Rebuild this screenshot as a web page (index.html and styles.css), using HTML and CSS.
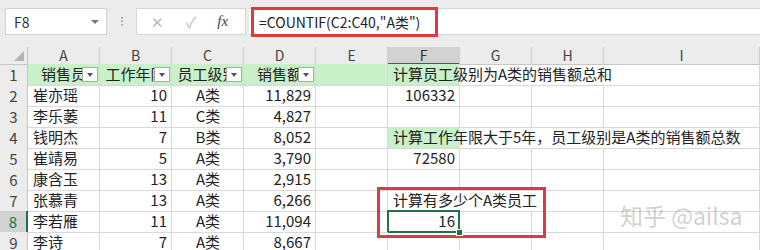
FILE: index.html
```html
<!DOCTYPE html>
<html lang="zh-CN">
<head>
  <meta charset="UTF-8">
  <title>COUNTIF</title>
  <link rel="stylesheet" href="styles.css">
</head>
<body>

  <div class="top">
    <div class="namebox"><span>F8</span><span class="caret"></span></div>
    <div class="grip"></div>
    <div class="fxbox">
      <span class="x">✕</span>
      <span class="ok">✓</span>
      <span class="fx">fx</span>
    </div>
    <div class="formula">=COUNTIF(C2:C40,"A类")</div>
    <div class="mark mark-formula"></div>
  </div>

  <div class="sheet">
    <div class="row head">
      <div class="corner"></div>
      <div class="ch">A</div><div class="ch">B</div><div class="ch">C</div><div class="ch">D</div>
      <div class="ch">E</div><div class="ch sel">F</div><div class="ch">G</div><div class="ch">H</div>
      <div class="ch">I</div>
    </div>

    <div class="row">
      <div class="rh">1</div>
      <div class="c title">销售员<i class="flt"></i></div>
      <div class="c title">工作年限<i class="flt"></i></div>
      <div class="c title">员工级别<i class="flt"></i></div>
      <div class="c title">销售额<i class="flt"></i></div>
      <div class="c green"></div>
      <div class="c note green-first span4">计算员工级别为A类的销售额总和</div>
    </div>

    <div class="row">
      <div class="rh">2</div>
      <div class="c">崔亦瑶</div><div class="c r">10</div><div class="c m">A类</div><div class="c r">11,829</div>
      <div class="c"></div><div class="c r">106332</div><div class="c"></div><div class="c"></div><div class="c"></div>
    </div>

    <div class="row">
      <div class="rh">3</div>
      <div class="c">李乐萎</div><div class="c r">11</div><div class="c m">C类</div><div class="c r">4,827</div>
      <div class="c"></div><div class="c"></div><div class="c"></div><div class="c"></div><div class="c"></div>
    </div>

    <div class="row">
      <div class="rh">4</div>
      <div class="c">钱明杰</div><div class="c r">7</div><div class="c m">B类</div><div class="c r">8,052</div>
      <div class="c"></div>
      <div class="c note green-first span4">计算工作年限大于5年，员工级别是A类的销售额总数</div>
    </div>

    <div class="row">
      <div class="rh">5</div>
      <div class="c">崔靖易</div><div class="c r">5</div><div class="c m">A类</div><div class="c r">3,790</div>
      <div class="c"></div><div class="c r">72580</div><div class="c"></div><div class="c"></div><div class="c"></div>
    </div>

    <div class="row">
      <div class="rh">6</div>
      <div class="c">康含玉</div><div class="c r">13</div><div class="c m">A类</div><div class="c r">2,915</div>
      <div class="c"></div><div class="c"></div><div class="c"></div><div class="c"></div><div class="c"></div>
    </div>

    <div class="row">
      <div class="rh">7</div>
      <div class="c">张慕青</div><div class="c r">13</div><div class="c m">A类</div><div class="c r">6,266</div>
      <div class="c"></div>
      <div class="c note span3">计算有多少个A类员工</div>
      <div class="c"></div>
    </div>

    <div class="row">
      <div class="rh sel">8</div>
      <div class="c">李若雁</div><div class="c r">11</div><div class="c m">A类</div><div class="c r">11,094</div>
      <div class="c"></div><div class="c r active">16</div><div class="c"></div><div class="c"></div><div class="c"></div>
    </div>

    <div class="row">
      <div class="rh">9</div>
      <div class="c">李诗</div><div class="c r">7</div><div class="c m">A类</div><div class="c r">8,667</div>
      <div class="c"></div><div class="c"></div><div class="c"></div><div class="c"></div><div class="c"></div>
    </div>

    <div class="mark mark-cells"></div>
    <div class="watermark">知乎 @ailsa</div>
  </div>

</body>
</html>
```

FILE: styles.css
```css
body {
  margin: 0;
  font-family: "Noto Sans CJK SC", "Noto Sans", sans-serif;
  color: #222;
  background: #fff;
  overflow: hidden;
}

/* formula bar */
.top {
  position: relative;
  display: flex;
  align-items: center;
  height: 47px;
  padding-left: 5px;
  background: #ececec;
  box-sizing: border-box;
}
.namebox {
  display: flex;
  align-items: center;
  justify-content: space-between;
  width: 102px;
  height: 27px;
  padding: 0 7px 0 8px;
  margin-top: -4px;
  box-sizing: border-box;
  background: #fff;
  border: 1px solid #d2d2d2;
  font-size: 14px;
  color: #333;
}
.caret {
  width: 0;
  height: 0;
  border-left: 4px solid transparent;
  border-right: 4px solid transparent;
  border-top: 4px solid #777;
}
.grip {
  width: 2px;
  height: 11px;
  margin: -4px 13px 0 14px;
  background: radial-gradient(circle, #aaa 0.9px, transparent 1.2px) 0 0 / 2px 3.5px;
}
.fxbox {
  display: flex;
  align-items: center;
  width: 110px;
  height: 27px;
  margin-top: -4px;
  box-sizing: border-box;
  background: #fff;
  border: 1px solid #d6d6d6;
  color: #bbb;
  font-size: 15px;
}
.fxbox .x { margin-left: 14px; }
.fxbox .ok { margin-left: 22px; }
.fxbox .fx {
  margin-left: 21px;
  font-family: "Liberation Serif", serif;
  font-style: italic;
  font-size: 15px;
  color: #444;
}
.formula {
  flex: 1;
  height: 27px;
  margin: -4px 0 0 3px;
  padding-left: 10px;
  line-height: 26px;
  box-sizing: border-box;
  background: #fff;
  border-top: 1px solid #d6d6d6;
  border-bottom: 1px solid #d6d6d6;
  font-size: 14px;
  color: #222;
}
.mark {
  position: absolute;
  border: 3px solid #dc3b42;
  box-sizing: border-box;
}
.mark-formula {
  left: 251px;
  top: 7px;
  width: 187px;
  height: 30px;
}

/* sheet */
.sheet {
  position: relative;
}
.row {
  display: grid;
  grid-template-columns: 28px repeat(8, 72px) 1fr;
  height: 21px;
}
.head {
  height: 17px;
  background: #ececec;
}
.corner {
  position: relative;
  border-right: 1px solid #c6c6c6;
  border-bottom: 1px solid #c6c6c6;
}
.corner::after {
  content: "";
  position: absolute;
  right: 3px;
  bottom: 3px;
  border-left: 10px solid transparent;
  border-bottom: 10px solid #b4b4b4;
}
.ch {
  text-align: center;
  font-size: 14px;
  line-height: 16px;
  color: #444;
  border-right: 1px solid #cfcfcf;
  border-bottom: 1px solid #c6c6c6;
}
.ch.sel {
  background: #d2d2d2;
  border-bottom: 2px solid #217346;
  color: #333;
}
.rh {
  text-align: center;
  font-size: 15px;
  line-height: 21px;
  color: #444;
  background: #ececec;
  border-right: 1px solid #c6c6c6;
  border-bottom: 1px solid #d8d8d8;
}
.rh.sel {
  background: #d2d2d2;
  color: #217346;
  border-right: 2px solid #217346;
}
.c {
  position: relative;
  padding: 0 4px 0 5px;
  font-size: 15px;
  line-height: 20px;
  white-space: nowrap;
  overflow: hidden;
  border-right: 1px solid #d8d8d8;
  border-bottom: 1px solid #d8d8d8;
}
.r { text-align: right; }
.m { text-align: center; }
.title {
  padding: 0;
  text-align: center;
  background: #c9f1c9;
}
.green { background: #c9f1c9; }
.green-first {
  background: linear-gradient(#c9f1c9, #c9f1c9) no-repeat 0 0 / 72px 100%;
}
.flt {
  position: absolute;
  right: 1px;
  top: 3px;
  width: 16px;
  height: 15px;
  box-sizing: border-box;
  background: #fff;
  border: 1px solid #a9a9a9;
}
.flt::after {
  content: "";
  position: absolute;
  left: 4px;
  top: 5px;
  border-left: 3.5px solid transparent;
  border-right: 3.5px solid transparent;
  border-top: 4px solid #555;
}
.note { overflow: visible; }
.span4 { grid-column: span 4; }
.span3 { grid-column: span 3; }
.active { overflow: visible; }
.active::after {
  content: "";
  position: absolute;
  left: -1px;
  top: -1px;
  right: -1px;
  bottom: -1px;
  border: 2px solid #217346;
}
.active::before {
  content: "";
  position: absolute;
  right: -4px;
  bottom: -4px;
  width: 5px;
  height: 5px;
  background: #217346;
  border: 1px solid #fff;
  z-index: 1;
}
.mark-cells {
  left: 377px;
  top: 140px;
  width: 169px;
  height: 51px;
}
.watermark {
  position: absolute;
  left: 620px;
  top: 153px;
  font-size: 23px;
  line-height: 30px;
  white-space: nowrap;
  color: rgba(150, 150, 150, 0.45);
}
```
